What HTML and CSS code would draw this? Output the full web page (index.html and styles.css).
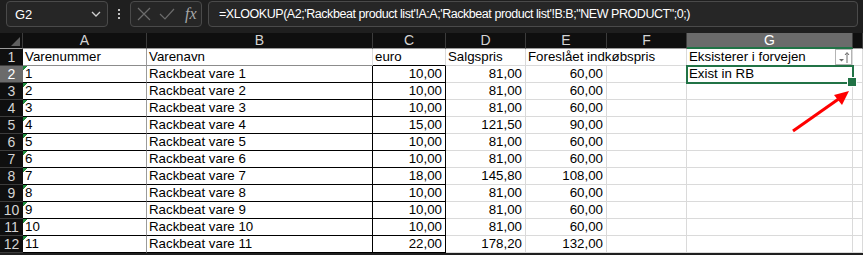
FILE: index.html
```html
<!DOCTYPE html>
<html lang="da">
<head>
  <meta charset="UTF-8">
  <title>Rackbeat produktliste</title>
  <link rel="stylesheet" href="styles.css">
</head>
<body>
  <div class="toolbar">
    <div class="name-box">
      <span>G2</span>
      <svg class="chevron" width="10" height="6" viewBox="0 0 10 6"><polyline points="1,1 5,5 9,1" fill="none" stroke="#d0d0d0" stroke-width="1.3"/></svg>
    </div>
    <div class="dots"><i></i><i></i><i></i></div>
    <div class="fx-box">
      <svg width="14" height="14" viewBox="0 0 14 14"><path d="M1 1 L13 13 M13 1 L1 13" stroke="#6c6c6c" stroke-width="1.2" fill="none"/></svg>
      <svg width="16" height="13" viewBox="0 0 16 13"><polyline points="1,6 6,11 15,1" stroke="#6c6c6c" stroke-width="1.2" fill="none"/></svg>
      <span class="fx">fx</span>
    </div>
    <div class="formula">=XLOOKUP(A2;'Rackbeat product list'!A:A;'Rackbeat product list'!B:B;"NEW PRODUCT";0;)</div>
  </div>

  <div class="sheet">
    <div class="row head">
      <div class="corner"><span class="tri"></span></div>
      <div class="hdr">A</div><div class="hdr">B</div><div class="hdr">C</div><div class="hdr">D</div>
      <div class="hdr">E</div><div class="hdr">F</div><div class="hdr active">G</div><div class="hdr"></div>
    </div>
    <div class="row first">
      <div class="rh">1</div>
      <div class="cell a">Varenummer</div><div class="cell b">Varenavn</div><div class="cell c">euro</div>
      <div class="cell d">Salgspris</div><div class="cell e wide">Foreslået indkøbspris</div>
      <div class="cell g"><span>Eksisterer i forvejen</span>
        <span class="filter"><svg width="14" height="13" viewBox="0 0 14 13"><path d="M2 8 L7 8 L4.5 10.5 Z" fill="#6a6a6a"/><path d="M10 12 L10 2 M8 4 L10 1.5 L12 4" stroke="#6a6a6a" stroke-width="1" fill="none"/></svg></span>
      </div>
      <div class="cell h"></div>
    </div>
    <div class="row">
      <div class="rh active">2</div>
      <div class="cell a err">1</div><div class="cell b">Rackbeat vare 1</div><div class="cell c num">10,00</div>
      <div class="cell d num">81,00</div><div class="cell e num">60,00</div><div class="cell f"></div>
      <div class="cell g selected">Exist in RB</div><div class="cell h"></div>
    </div>
    <div class="row">
      <div class="rh">3</div>
      <div class="cell a err">2</div><div class="cell b">Rackbeat vare 2</div><div class="cell c num">10,00</div>
      <div class="cell d num">81,00</div><div class="cell e num">60,00</div><div class="cell f"></div>
      <div class="cell g"></div><div class="cell h"></div>
    </div>
    <div class="row">
      <div class="rh">4</div>
      <div class="cell a err">3</div><div class="cell b">Rackbeat vare 3</div><div class="cell c num">10,00</div>
      <div class="cell d num">81,00</div><div class="cell e num">60,00</div><div class="cell f"></div>
      <div class="cell g"></div><div class="cell h"></div>
    </div>
    <div class="row">
      <div class="rh">5</div>
      <div class="cell a err">4</div><div class="cell b">Rackbeat vare 4</div><div class="cell c num">15,00</div>
      <div class="cell d num">121,50</div><div class="cell e num">90,00</div><div class="cell f"></div>
      <div class="cell g"></div><div class="cell h"></div>
    </div>
    <div class="row">
      <div class="rh">6</div>
      <div class="cell a err">5</div><div class="cell b">Rackbeat vare 5</div><div class="cell c num">10,00</div>
      <div class="cell d num">81,00</div><div class="cell e num">60,00</div><div class="cell f"></div>
      <div class="cell g"></div><div class="cell h"></div>
    </div>
    <div class="row">
      <div class="rh">7</div>
      <div class="cell a err">6</div><div class="cell b">Rackbeat vare 6</div><div class="cell c num">10,00</div>
      <div class="cell d num">81,00</div><div class="cell e num">60,00</div><div class="cell f"></div>
      <div class="cell g"></div><div class="cell h"></div>
    </div>
    <div class="row">
      <div class="rh">8</div>
      <div class="cell a err">7</div><div class="cell b">Rackbeat vare 7</div><div class="cell c num">18,00</div>
      <div class="cell d num">145,80</div><div class="cell e num">108,00</div><div class="cell f"></div>
      <div class="cell g"></div><div class="cell h"></div>
    </div>
    <div class="row">
      <div class="rh">9</div>
      <div class="cell a err">8</div><div class="cell b">Rackbeat vare 8</div><div class="cell c num">10,00</div>
      <div class="cell d num">81,00</div><div class="cell e num">60,00</div><div class="cell f"></div>
      <div class="cell g"></div><div class="cell h"></div>
    </div>
    <div class="row">
      <div class="rh">10</div>
      <div class="cell a err">9</div><div class="cell b">Rackbeat vare 9</div><div class="cell c num">10,00</div>
      <div class="cell d num">81,00</div><div class="cell e num">60,00</div><div class="cell f"></div>
      <div class="cell g"></div><div class="cell h"></div>
    </div>
    <div class="row">
      <div class="rh">11</div>
      <div class="cell a err">10</div><div class="cell b">Rackbeat vare 10</div><div class="cell c num">10,00</div>
      <div class="cell d num">81,00</div><div class="cell e num">60,00</div><div class="cell f"></div>
      <div class="cell g"></div><div class="cell h"></div>
    </div>
    <div class="row">
      <div class="rh">12</div>
      <div class="cell a err">11</div><div class="cell b">Rackbeat vare 11</div><div class="cell c num">22,00</div>
      <div class="cell d num">178,20</div><div class="cell e num">132,00</div><div class="cell f"></div>
      <div class="cell g"></div><div class="cell h"></div>
    </div>
  </div>

  <!-- annotation arrow drawn on top of the screenshot -->
  <svg class="arrow" width="863" height="255" viewBox="0 0 863 255">
    <line x1="793" y1="131" x2="840" y2="98" stroke="#ff0000" stroke-width="3"/>
    <polygon points="849,91 834,95 842,105" fill="#ff0000"/>
  </svg>
</body>
</html>
```

FILE: styles.css
```css
* {
  box-sizing: border-box;
}

body {
  margin: 0;
  width: 863px;
  height: 255px;
  overflow: hidden;
  background-color: #1f1f1f;
  font-family: 'Liberation Sans', Arial, sans-serif;
}

/* formula bar */
.toolbar {
  height: 33px;
  display: flex;
  align-items: flex-start;
  padding: 1px 5px 0 6px;
  background-color: #1f1f1f;
  color: #ffffff;
}

.name-box {
  width: 102px;
  height: 26px;
  border: 1px solid #4a4a4a;
  border-radius: 4px;
  background-color: #262626;
  display: flex;
  align-items: center;
  justify-content: space-between;
  padding: 0 6px 0 8px;
  font-size: 13px;
}

.dots {
  width: 22px;
  height: 26px;
  display: flex;
  flex-direction: column;
  align-items: center;
  justify-content: center;
  gap: 2px;
}

.dots i {
  width: 2px;
  height: 2px;
  background-color: #c0c0c0;
}

.fx-box {
  width: 72px;
  height: 26px;
  border: 1px solid #4a4a4a;
  border-radius: 4px;
  background-color: #262626;
  display: flex;
  align-items: center;
  gap: 8px;
  padding: 0 4px 0 6px;
}

.fx {
  font-family: 'Liberation Serif', serif;
  font-style: italic;
  font-size: 16px;
  color: #a8a8a8;
  margin-left: 2px;
}

.formula {
  flex: 1;
  height: 26px;
  margin-left: 6px;
  border: 1px solid #4a4a4a;
  border-radius: 4px;
  background-color: #262626;
  padding: 0 10px;
  font-size: 12.5px;
  letter-spacing: -0.45px;
  line-height: 24px;
  white-space: nowrap;
  overflow: hidden;
}

/* sheet grid */
.sheet {
  display: grid;
  grid-template-columns: 23px 124px 226px 73px 80px 81px 80px 166px 1fr;
  grid-template-rows: 16px repeat(12, 17px);
  background-color: #ffffff;
}

.row {
  display: contents;
}

.corner,
.hdr,
.rh {
  background-color: #0f0f0f;
  color: #d4d4d4;
  font-size: 14px;
  line-height: 15px;
  text-align: center;
}

.corner {
  border-right: 1px solid #3c3c3c;
  border-bottom: 1px solid #9b9b9b;
  display: flex;
  align-items: flex-end;
  justify-content: flex-end;
  padding: 0 2px 2px 0;
}

.tri {
  width: 0;
  height: 0;
  border-left: 9px solid transparent;
  border-bottom: 9px solid #5e5e5e;
}

.hdr {
  border-right: 1px solid #3c3c3c;
  border-bottom: 1px solid #9b9b9b;
}

.hdr.active {
  background-color: #6b6b6b;
  color: #ffffff;
  border-bottom: 2px solid #217346;
}

.rh {
  line-height: 16px;
  border-bottom: 1px solid #3c3c3c;
}

.rh.active {
  background-color: #6b6b6b;
  color: #ffffff;
}

.cell {
  background-color: #ffffff;
  color: #000000;
  font-size: 13.3px;
  line-height: 16px;
  padding: 0 2px;
  white-space: nowrap;
  overflow: hidden;
  border-right: 1px solid #dadada;
  border-bottom: 1px solid #dadada;
}

.num {
  text-align: right;
  padding-right: 3px;
}

.cell.a {
  border-right-color: #9b9b9b;
  border-bottom-color: #000000;
}

.cell.b,
.cell.c {
  border-right-color: #000000;
  border-bottom-color: #000000;
}

.first .cell.a,
.first .cell.b {
  border-bottom-color: #8c8c8c;
}

.first .cell.b,
.first .cell.c {
  border-right-color: #dadada;
}

.cell.wide {
  grid-column: span 2;
}

.cell.err {
  background: linear-gradient(135deg, #1f8a3c 3px, transparent 3px) no-repeat;
  background-size: 6px 6px;
  background-color: #ffffff;
}

.cell.g {
  display: flex;
  align-items: center;
  justify-content: space-between;
  padding-right: 0;
}

.filter {
  width: 17px;
  height: 16px;
  border: 1px solid #b4b4b4;
  background-color: #ffffff;
  display: flex;
  align-items: center;
  justify-content: center;
}

.cell.selected {
  position: relative;
  z-index: 1;
  overflow: visible;
  outline: 2px solid #217346;
  outline-offset: -1px;
}

.cell.selected::after {
  content: '';
  position: absolute;
  right: -5px;
  bottom: -5px;
  width: 8px;
  height: 8px;
  background-color: #217346;
  border: 1px solid #ffffff;
}

.arrow {
  position: absolute;
  top: 0;
  left: 0;
  pointer-events: none;
}
```
